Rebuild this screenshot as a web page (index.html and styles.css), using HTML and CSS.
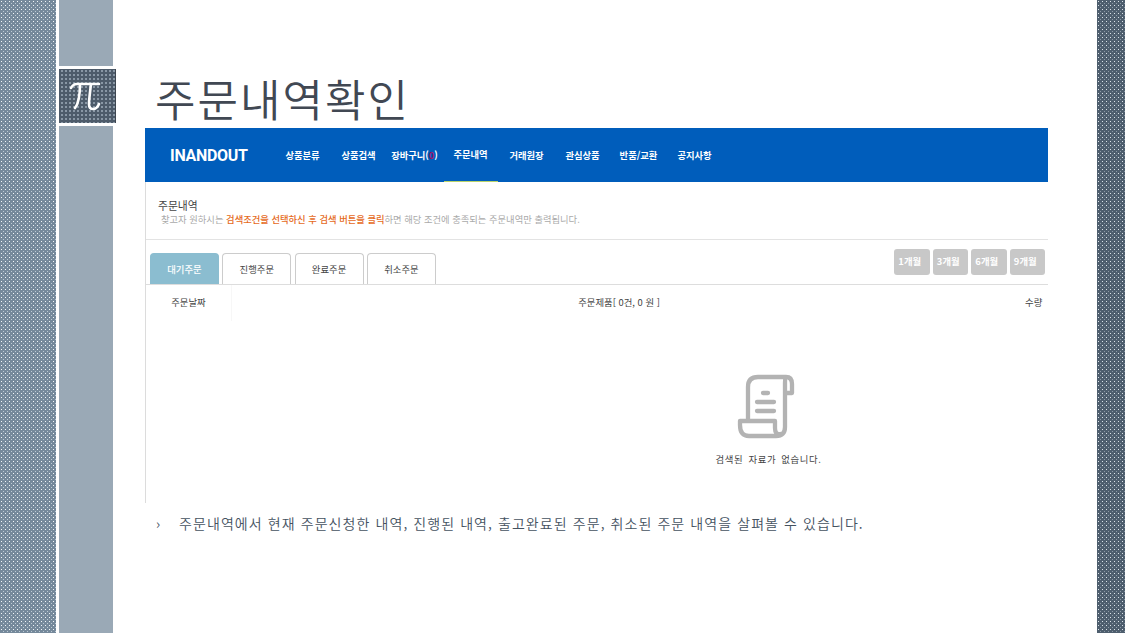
FILE: index.html
```html
<!doctype html>
<html lang="ko">
  <head>
    <meta charset="UTF-8" />
    <meta name="viewport" content="width=device-width, initial-scale=1.0" />
    <title>주문내역확인</title>
    <link rel="stylesheet" href="styles.css">
  </head>
  <body>
    <div class="slide">
      <div class="edge edge-left"></div>
      <div class="rail">
        <div class="rail-top"></div>
        <div class="badge">
          <svg width="34" height="30" viewBox="0 0 34 30">
            <path d="M3 7 Q5 3 9 3 H31 M12 3 C12 13 11 22 7 27 M23 3 C22 12 21 18 21 23 Q21 28 25 28 Q29 28 31 23" />
          </svg>
        </div>
        <div class="rail-bottom"></div>
      </div>

      <main class="content">
        <h1>주문내역확인</h1>

        <section class="screen">
          <header class="topbar">
            <div class="logo">INANDOUT</div>
            <nav>
              <a>상품분류</a>
              <a>상품검색</a>
              <a>장바구니(<i>0</i>)</a>
              <a class="current">주문내역</a>
              <a>거래원장</a>
              <a>관심상품</a>
              <a>반품/교환</a>
              <a>공지사항</a>
            </nav>
          </header>

          <div class="intro">
            <h2>주문내역</h2>
            <p>찾고자 원하시는 <b>검색조건을 선택하신 후 검색 버튼을 클릭</b>하면 해당 조건에 충족되는 주문내역만 출력됩니다.</p>
          </div>

          <div class="toolbar">
            <div class="tabs">
              <span class="tab active">대기주문</span>
              <span class="tab">진행주문</span>
              <span class="tab">완료주문</span>
              <span class="tab">취소주문</span>
            </div>
            <div class="months">
              <span>1개월</span>
              <span>3개월</span>
              <span>6개월</span>
              <span>9개월</span>
            </div>
          </div>

          <div class="table-head">
            <span class="col-date">주문날짜</span>
            <span class="col-item">주문제품[ 0건, 0 원 ]</span>
            <span class="col-qty">수량</span>
          </div>

          <div class="empty">
            <svg width="60" height="66" viewBox="0 0 60 66">
              <path d="M11 46 V13 Q11 3 21 3 H49 Q55 3 55 10 V19 H49 M49 3 Q48 4 48 9 V53 Q48 62 39 62 H12 Q3 62 3 51 V47 H38 V54 Q38 61 43 60" />
              <path d="M26 19 H31 M20 28 H37 M20 37 H37" />
            </svg>
            <p>검색된 자료가 없습니다.</p>
          </div>
        </section>

        <ul class="notes">
          <li>주문내역에서 현재 주문신청한 내역, 진행된 내역, 출고완료된 주문, 취소된 주문 내역을 살펴볼 수 있습니다.</li>
        </ul>
      </main>

      <div class="edge edge-right"></div>
    </div>
  </body>
</html>
```

FILE: styles.css
```css
* {
  box-sizing: border-box;
}
body {
  margin: 0;
  background: #fff;
  font-family: "Noto Sans CJK KR", sans-serif;
}
h1,
h2,
p,
ul {
  margin: 0;
  padding: 0;
  font-weight: 400;
}
.slide {
  display: flex;
  height: 633px;
  overflow: hidden;
}

/* dotted side strips */
.edge {
  flex: none;
  background-size: 4px 4px;
  background-position: 1px 1px, 3px 3px;
}
.edge-left {
  width: 56px;
  margin-right: 3px;
  background-color: #75899b;
  background-image:
    conic-gradient(from 0deg at 1px 1px, transparent 75%, #f2f6f8 0),
    conic-gradient(from 0deg at 1px 1px, transparent 75%, #bccad5 0);
}
.edge-right {
  width: 28px;
  background-color: #4e5e6e;
  background-image:
    conic-gradient(from 0deg at 1px 1px, transparent 75%, #dbe3e9 0),
    conic-gradient(from 0deg at 1px 1px, transparent 75%, #8b99a6 0);
}

.rail {
  display: flex;
  flex-direction: column;
  flex: none;
  width: 57px;
}
.rail-top,
.rail-bottom {
  width: 54px;
  background: #9aa9b6;
}
.rail-top {
  height: 66px;
}
.rail-bottom {
  flex: 1;
}
.badge {
  display: flex;
  align-items: center;
  justify-content: center;
  height: 54px;
  margin: 3px 0;
  padding-right: 4px;
  background-color: #4d5b6a;
  background-image: conic-gradient(from 0deg at 2px 2px, transparent 75%, #8997a5 0);
  background-size: 4px 4px;
  background-position: 2px 1px;
  border-right: 1px solid #3d4650;
}
.badge svg {
  fill: none;
  stroke: #fff;
  stroke-width: 2.6;
  stroke-linecap: round;
}

.content {
  flex: 1;
  padding: 73px 0 0 29px;
}
h1 {
  height: 55px;
  padding-left: 10px;
  font-size: 44px;
  font-weight: 350;
  line-height: 50px;
  letter-spacing: 2px;
  color: #414853;
}

.screen {
  width: 903px;
  height: 375px;
  border-left: 1px solid #dcdcdc;
  color: #444;
  font-size: 9.4px;
}
.topbar {
  display: flex;
  align-items: center;
  height: 54px;
  margin-left: -1px;
  padding-left: 25px;
  background: #005dbb;
  color: #fff;
}
.logo {
  width: 105.5px;
  font-family: Roboto, sans-serif;
  font-size: 16px;
  font-weight: 700;
  letter-spacing: -0.3px;
}
nav {
  display: flex;
  gap: 2px;
  height: 54px;
}
nav a {
  width: 54px;
  line-height: 54px;
  font-weight: 700;
  font-size: 9.3px;
  text-align: center;
  white-space: nowrap;
}
nav i {
  color: #a01468;
  font-style: normal;
}
nav .current {
  line-height: 53px;
  border-bottom: 1px solid #b9d36a;
}

.intro {
  height: 58px;
  padding: 15px 0 0 12px;
  border-bottom: 1px solid #e3e3e3;
}
.intro h2 {
  font-size: 10.8px;
  line-height: 16px;
}
.intro p {
  padding-left: 3px;
  font-size: 9.3px;
  line-height: 13px;
  color: #aaa;
  white-space: nowrap;
}
.intro b {
  font-weight: 500;
  color: #e56a1c;
}

.toolbar {
  display: flex;
  justify-content: space-between;
  height: 45px;
  padding: 9px 3px 0 4px;
  border-bottom: 1px solid #ddd;
}
.tabs {
  display: flex;
  gap: 3.3px;
  padding-top: 4px;
}
.tab {
  width: 69px;
  height: 31px;
  border: 1px solid #ccc;
  border-bottom: 0;
  border-radius: 4px 4px 0 0;
  line-height: 30px;
  text-align: center;
}
.tab.active {
  border-color: #8bbdd0;
  background: #8bbdd0;
  color: #fff;
  font-weight: 500;
}
.months {
  display: flex;
  gap: 3px;
}
.months span {
  width: 35.5px;
  height: 26px;
  padding-right: 4px;
  border-radius: 3px;
  background: #c8c8c8;
  color: #fff;
  font-weight: 700;
  line-height: 25px;
  text-align: center;
}

.table-head {
  display: flex;
  height: 36px;
  line-height: 35px;
}
.col-date {
  width: 86px;
  border-right: 1px solid #f7f7f7;
  text-align: center;
}
.col-item {
  flex: 1;
  padding-right: 19px;
  text-align: center;
}
.col-qty {
  width: 23px;
}

.empty {
  display: flex;
  flex-direction: column;
  align-items: center;
  width: 302px;
  margin-left: 470px;
  padding-top: 53px;
}
.empty svg {
  fill: none;
  stroke: #b3b3b3;
  stroke-width: 4.3;
  stroke-linejoin: round;
  stroke-linecap: round;
}
.empty p {
  margin: 10px 0 0 3px;
  line-height: 18px;
  letter-spacing: 0.6px;
  word-spacing: 2px;
}

.notes {
  padding: 8px 0 0 11px;
  list-style: none;
}
.notes li {
  display: flex;
  font-size: 14px;
  font-weight: 350;
  line-height: 24px;
  letter-spacing: 1.08px;
  color: #45525f;
}
.notes li::before {
  content: "›";
  width: 23px;
}
```
